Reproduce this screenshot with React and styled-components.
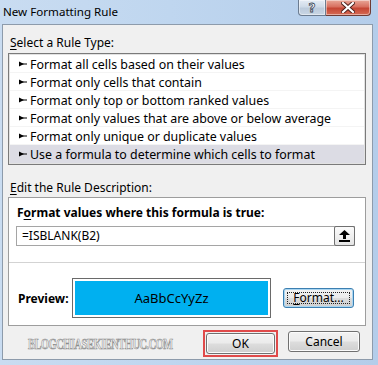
import React from "react";
import styled, { createGlobalStyle } from "styled-components";

const GlobalStyle = createGlobalStyle`
  html, body {
    margin: 0;
    padding: 0;
  }
  body {
    width: 378px;
    height: 365px;
    overflow: hidden;
    font-family: "Noto Sans", "Open Sans", sans-serif;
    font-size: 12px;
    color: #000;
  }
`;

const Window = styled.div`
  width: 378px;
  height: 365px;
  box-sizing: border-box;
  padding: 0 5px 5px 2px;
  display: flex;
  flex-direction: column;
  background: linear-gradient(90deg, #c9dcf1 0%, #bfd6ef 45%, #b4cdea 100%);
`;

const TitleBar = styled.div`
  height: 24px;
  flex: none;
  display: flex;
  align-items: flex-start;
`;

const Title = styled.div`
  align-self: center;
  padding-left: 1px;
  font-size: 11.6px;
  line-height: 16px;
  color: #000;
`;

const Captions = styled.div`
  margin-left: auto;
  margin-right: 2px;
  display: flex;
`;

const CaptionButton = styled.div`
  height: 16px;
  box-sizing: border-box;
  display: flex;
  align-items: center;
  justify-content: center;
  width: ${(p) => (p.$close ? "45px" : "28px")};
  border: 1px solid ${(p) => (p.$close ? "#6e3b34" : "#6c7c90")};
  border-top: none;
  border-left: ${(p) => (p.$close ? "none" : undefined)};
  border-radius: ${(p) => (p.$close ? "0 0 4px 0" : "0 0 0 4px")};
  background: ${(p) =>
    p.$close
      ? "linear-gradient(180deg, #e9a899 0%, #d8705f 45%, #c54634 55%, #d56b55 100%)"
      : "linear-gradient(180deg, #e4ecf5 0%, #cfdbe8 45%, #bccbdc 55%, #c9d6e4 100%)"};
  box-shadow: inset 0 0 0 1px rgba(255, 255, 255, 0.45);
`;

const HelpGlyph = styled.span`
  font-family: "DejaVu Sans", sans-serif;
  font-weight: 700;
  font-size: 12px;
  line-height: 12px;
  color: #fff;
  -webkit-text-stroke: 0.8px #3a4656;
`;

const Body = styled.div`
  flex: 1;
  display: flex;
  flex-direction: column;
  background: #f0f0f0;
  border: 1px solid #8d9bab;
  padding: 10px 6px 0 5px;
`;

const SectionLabel = styled.div`
  line-height: 16px;
  padding-left: 2px;
  margin-top: ${(p) => p.$top || 0}px;
`;

const Key = styled.span`
  text-decoration: underline;
  text-underline-offset: 2px;
`;

const ListBox = styled.div`
  margin-top: 2px;
  background: #fff;
  border: 1px solid #7a7a7a;
  box-shadow: inset 0 0 0 1px #e2e2e2;
  padding: 1px;
`;

const RuleRow = styled.div`
  height: 18px;
  display: flex;
  align-items: center;
  gap: 3px;
  padding-left: 9px;
  white-space: nowrap;
  font-size: 12.4px;
  background: ${(p) => (p.$selected ? "#dcdce4" : "transparent")};
  box-shadow: inset 0 -1px 0 ${(p) => (p.$selected ? "#dcdce4" : "#f4f4f4")};
`;

const GroupBox = styled.div`
  margin-top: 1px;
  background: #fff;
  border: 1px solid #9d9d9d;
  padding: 7px 10px 7px 7px;
`;

const BoldLabel = styled.div`
  font-weight: 700;
  line-height: 16px;
  padding-left: 1px;
`;

const FormulaInput = styled.div`
  margin-top: 5px;
  height: 20px;
  box-sizing: border-box;
  display: flex;
  align-items: center;
  border: 1px solid #a5a5a5;
  padding-left: 5px;
`;

const FormulaText = styled.span`
  flex: 1;
  line-height: 16px;
`;

const CollapseButton = styled.div`
  width: 21px;
  height: 20px;
  box-sizing: border-box;
  margin-right: -1px;
  display: flex;
  align-items: center;
  justify-content: center;
  border: 1px solid #707070;
  border-radius: 2px;
  background: linear-gradient(180deg, #fbfbfb 0%, #f0f0f0 50%, #e4e4e4 100%);
`;

const Separator = styled.div`
  margin: 16px -10px 0 -7px;
  height: 1px;
  background: #d3d3d3;
`;

const PreviewRow = styled.div`
  margin-top: 15px;
  display: flex;
  align-items: center;
`;

const PreviewLabel = styled.div`
  font-weight: 700;
  width: 54px;
  padding-left: 2px;
`;

const PreviewFrame = styled.div`
  width: 199px;
  height: 40px;
  box-sizing: border-box;
  border: 1px solid #6a6a6a;
  padding: 2px;
`;

const PreviewFill = styled.div`
  height: 100%;
  background: #00b0f0;
  display: flex;
  align-items: center;
  justify-content: center;
  font-size: 13px;
`;

const Button = styled.div`
  box-sizing: border-box;
  width: ${(p) => p.$w}px;
  height: ${(p) => p.$h || 21}px;
  display: flex;
  align-items: center;
  justify-content: center;
  border: 1px solid ${(p) => (p.$focused ? "#3c7fb1" : "#707070")};
  border-radius: 3px;
  background: linear-gradient(180deg, #f2f2f2 0%, #ebebeb 48%, #dddddd 52%, #cfcfcf 100%);
  box-shadow: inset 0 0 0 1px ${(p) => (p.$focused ? "#a9d6f2" : "#fbfbfb")};
  position: relative;
  line-height: 16px;
`;

const FocusRing = styled.span`
  position: absolute;
  inset: 3px;
  border: 1px dotted #222;
`;

const FormatButtonWrap = styled.div`
  margin-left: 12px;
`;

const ButtonRow = styled.div`
  margin-top: 4px;
  display: flex;
  align-items: flex-start;
`;

const Watermark = styled.div`
  flex: none;
  width: 150px;
  margin-left: 20px;
  margin-top: 6px;
  white-space: nowrap;
  font-family: "Liberation Serif", serif;
  font-weight: 700;
  font-size: 15px;
  line-height: 16px;
  letter-spacing: -0.6px;
  color: #f4f4f4;
  -webkit-text-stroke: 0.7px #8c8c8c;
  transform: scaleX(0.69);
  transform-origin: left center;
`;

const Highlight = styled.div`
  margin-left: auto;
  border: 2px solid #e04a4a;
  padding: 1px;
`;

const CancelWrap = styled.div`
  margin: 1px 6px 0 10px;
`;

const Bullet = () => (
  <svg width="8" height="6" viewBox="0 0 8 6">
    <polygon points="0,0.5 5,3 0,5.5" fill="#000" />
    <rect x="0" y="2.5" width="8" height="1" fill="#000" />
  </svg>
);

const CloseGlyph = () => (
  <svg width="14" height="11" viewBox="0 0 14 11">
    <path d="M2 1 L12 10 M12 1 L2 10" stroke="#4a1f1a" strokeWidth="4" strokeLinecap="square" />
    <path d="M2 1 L12 10 M12 1 L2 10" stroke="#fff" strokeWidth="2.2" strokeLinecap="square" />
  </svg>
);

const UploadGlyph = () => (
  <svg width="11" height="12" viewBox="0 0 11 12">
    <polygon points="5.5,0 11,5 7,5 7,9 4,9 4,5 0,5" fill="#000" />
    <rect x="0" y="10" width="11" height="2" fill="#000" />
  </svg>
);

const rules = [
  "Format all cells based on their values",
  "Format only cells that contain",
  "Format only top or bottom ranked values",
  "Format only values that are above or below average",
  "Format only unique or duplicate values",
  "Use a formula to determine which cells to format",
];

export default function App() {
  return (
    <>
      <GlobalStyle />
      <Window>
        <TitleBar>
          <Title>New Formatting Rule</Title>
          <Captions>
            <CaptionButton>
              <HelpGlyph>?</HelpGlyph>
            </CaptionButton>
            <CaptionButton $close>
              <CloseGlyph />
            </CaptionButton>
          </Captions>
        </TitleBar>
        <Body>
          <SectionLabel>
            <Key>S</Key>elect a Rule Type:
          </SectionLabel>
          <ListBox>
            {rules.map((r, i) => (
              <RuleRow key={r} $selected={i === rules.length - 1}>
                <Bullet />
                <span>{r}</span>
              </RuleRow>
            ))}
          </ListBox>
          <SectionLabel $top={15}>
            <Key>E</Key>dit the Rule Description:
          </SectionLabel>
          <GroupBox>
            <BoldLabel>
              F<Key>o</Key>rmat values where this formula is true:
            </BoldLabel>
            <FormulaInput>
              <FormulaText>=ISBLANK(B2)</FormulaText>
              <CollapseButton>
                <UploadGlyph />
              </CollapseButton>
            </FormulaInput>
            <Separator />
            <PreviewRow>
              <PreviewLabel>Preview:</PreviewLabel>
              <PreviewFrame>
                <PreviewFill>AaBbCcYyZz</PreviewFill>
              </PreviewFrame>
              <FormatButtonWrap>
                <Button $w={71} $h={20} $focused>
                  <FocusRing />
                  <span>
                    <Key>F</Key>ormat...
                  </span>
                </Button>
              </FormatButtonWrap>
            </PreviewRow>
          </GroupBox>
          <ButtonRow>
            <Watermark>BLOGCHIASEKIENTHUC.COM</Watermark>
            <Highlight>
              <Button $w={69}>OK</Button>
            </Highlight>
            <CancelWrap>
              <Button $w={72}>Cancel</Button>
            </CancelWrap>
          </ButtonRow>
        </Body>
      </Window>
    </>
  );
}
